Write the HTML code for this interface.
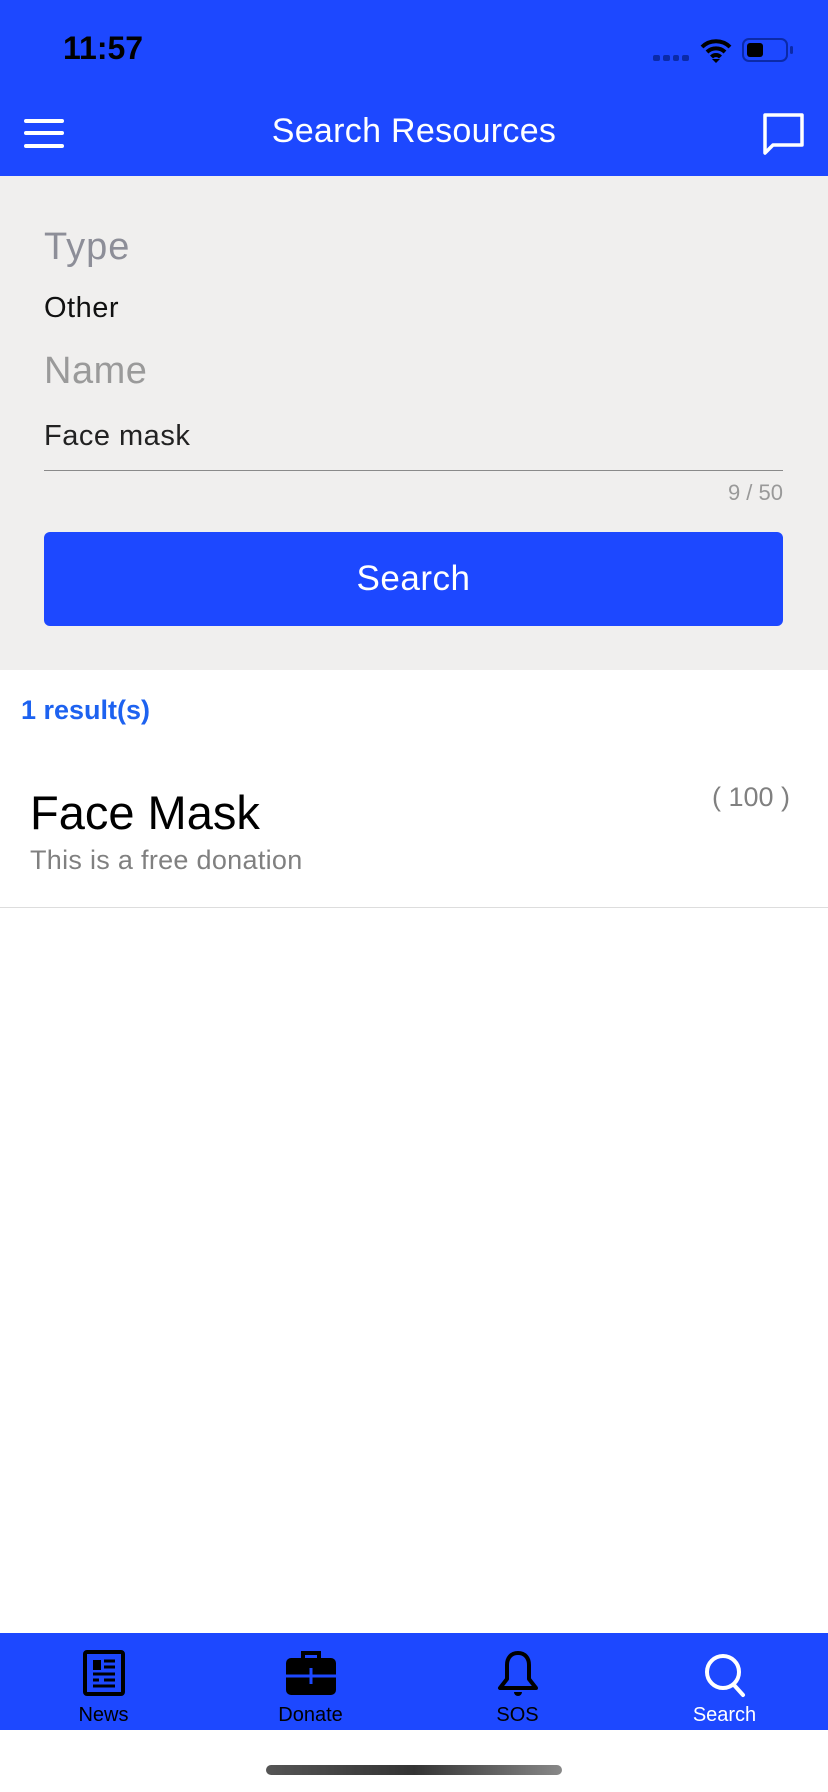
<!DOCTYPE html>
<html><head><meta charset="utf-8"><style>
*{margin:0;padding:0;box-sizing:border-box}
body{width:828px;height:1792px;position:relative;background:#fff;font-family:"Liberation Sans",sans-serif;overflow:hidden}
.abs{position:absolute}
</style></head><body>
<div class="abs" style="left:0;top:0;width:828px;height:176px;background:#1d48ff"></div>
<div class="abs" style="left:63px;top:30px;font-size:32px;font-weight:bold;color:#000">11:57</div>
<div class="abs" style="left:653px;top:55px;width:36px;height:6px;display:flex;gap:3px">
<span style="flex:1;background:#0b2aa8;border-radius:2px"></span><span style="flex:1;background:#0b2aa8;border-radius:2px"></span><span style="flex:1;background:#0b2aa8;border-radius:2px"></span><span style="flex:1;background:#0b2aa8;border-radius:2px"></span></div>
<svg class="abs" style="left:700px;top:38px" width="32" height="26" viewBox="0 0 32 26"><path d="M2 9a20 20 0 0 1 28 0M7 14a13 13 0 0 1 18 0M11.5 19a6 6 0 0 1 9 0" stroke="#000" stroke-width="4" fill="none"/><path d="M16 25l-4-4h8z" fill="#000"/></svg>
<div class="abs" style="left:742px;top:38px;width:46px;height:24px;border:2px solid #0b2aa8;border-radius:7px"><div style="margin:3px;width:16px;height:14px;background:#000;border-radius:3px"></div></div>
<div class="abs" style="left:790px;top:46px;width:3px;height:8px;background:#0b2aa8;border-radius:2px"></div>
<div class="abs" style="left:24px;top:119px;width:40px;height:4px;background:#fff;border-radius:2px;box-shadow:0 12px 0 #fff,0 25px 0 #fff"></div>
<div class="abs" style="left:0;width:828px;top:112px;text-align:center;font-size:34px;color:#fff;letter-spacing:0.3px">Search Resources</div>
<svg class="abs" style="left:762px;top:112px" width="44" height="44" viewBox="0 0 44 44"><path d="M3 3h37v30H11l-8 8z" stroke="#fff" stroke-width="3.5" fill="none" stroke-linejoin="round"/></svg>
<div class="abs" style="left:0;top:176px;width:828px;height:494px;background:#f0efee"></div>
<div class="abs" style="left:44px;top:226px;font-size:38px;color:#8d8e98;letter-spacing:1px">Type</div>
<div class="abs" style="left:44px;top:292px;font-size:29px;color:#111;letter-spacing:0.5px">Other</div>
<div class="abs" style="left:44px;top:350px;font-size:38px;color:#9a9a9a;letter-spacing:0.5px">Name</div>
<div class="abs" style="left:44px;top:420px;font-size:29px;color:#222;letter-spacing:0.5px">Face mask</div>
<div class="abs" style="left:44px;top:470px;width:739px;height:1px;background:#8a8a8a"></div>
<div class="abs" style="left:600px;width:183px;top:480px;text-align:right;font-size:22px;color:#999">9 / 50</div>
<div class="abs" style="left:44px;top:532px;width:739px;height:94px;background:#1d48ff;border-radius:6px;color:#fff;font-size:35px;text-align:center;line-height:94px;letter-spacing:0.5px">Search</div>
<div class="abs" style="left:21px;top:695px;font-size:27px;font-weight:bold;color:#1d62f0">1 result(s)</div>
<div class="abs" style="left:30px;top:785px;font-size:47px;color:#000">Face Mask</div>
<div class="abs" style="left:30px;top:845px;font-size:27px;color:#808080;letter-spacing:0.3px">This is a free donation</div>
<div class="abs" style="left:690px;width:100px;top:782px;text-align:right;font-size:27px;color:#808080">( 100 )</div>
<div class="abs" style="left:0;top:907px;width:828px;height:1px;background:#ddd"></div>
<div class="abs" style="left:0;top:1633px;width:828px;height:97px;background:#1d48ff"></div>
<svg class="abs" style="left:83px;top:1650px" width="42" height="46" viewBox="0 0 42 46"><rect x="2" y="2" width="38" height="42" rx="2" fill="none" stroke="#000" stroke-width="4"/><rect x="10" y="10" width="8" height="10" fill="#000"/><path d="M21 11h11M21 17h11M10 24h22M10 30h6M21 30h11M10 36h22" stroke="#000" stroke-width="3"/></svg>
<svg class="abs" style="left:285px;top:1650px" width="52" height="46" viewBox="0 0 52 46"><path d="M18 9V3h16v6" stroke="#000" stroke-width="4" fill="none"/><rect x="1" y="8" width="50" height="37" rx="5" fill="#000"/><path d="M1 26h50M26 18v16" stroke="#1d48ff" stroke-width="3"/></svg>
<svg class="abs" style="left:496px;top:1650px" width="44" height="48" viewBox="0 0 44 48"><path d="M22 3c-7 0-11 5-11 12v14l-7 9h36l-7-9V15c0-7-4-12-11-12z" fill="none" stroke="#000" stroke-width="4" stroke-linejoin="round"/><path d="M18 42a4 4 0 0 0 8 0" fill="#000"/></svg>
<svg class="abs" style="left:704px;top:1652px" width="44" height="48" viewBox="0 0 44 48"><circle cx="19" cy="20" r="16" fill="none" stroke="#fff" stroke-width="4"/><path d="M30 33l9 10" stroke="#fff" stroke-width="4" stroke-linecap="round"/></svg>
<div class="abs" style="left:0;width:207px;top:1704px;text-align:center;font-size:20px;color:#000">News</div>
<div class="abs" style="left:207px;width:207px;top:1704px;text-align:center;font-size:20px;color:#000">Donate</div>
<div class="abs" style="left:414px;width:207px;top:1704px;text-align:center;font-size:20px;color:#000">SOS</div>
<div class="abs" style="left:621px;width:207px;top:1704px;text-align:center;font-size:20px;color:#fff">Search</div>
<div class="abs" style="left:266px;top:1765px;width:296px;height:10px;border-radius:5px;background:linear-gradient(90deg,#555,#333 50%,#888)"></div>
</body></html>
